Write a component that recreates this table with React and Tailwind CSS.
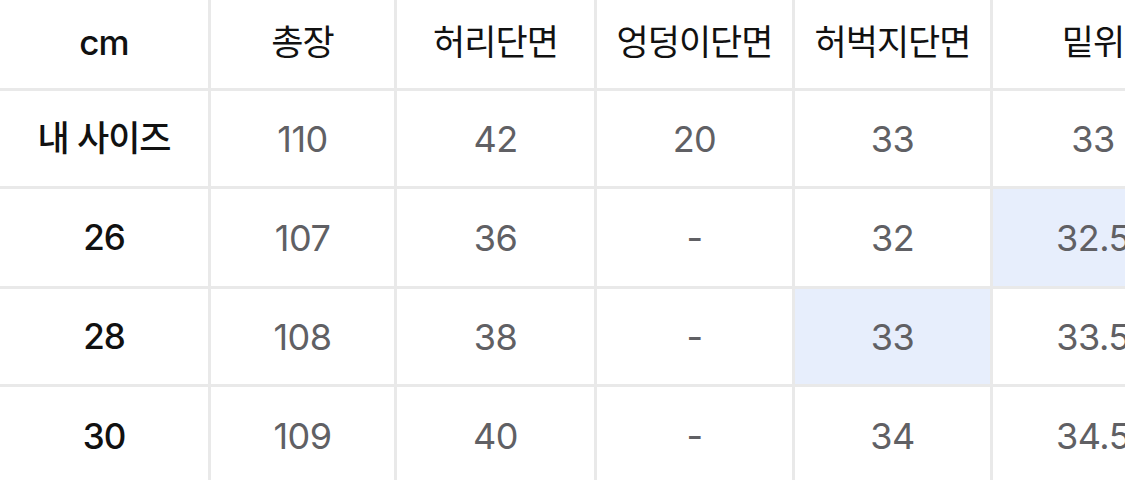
import React from 'react';

const columns = ['cm', '총장', '허리단면', '엉덩이단면', '허벅지단면', '밑위'];

const rows = [
  { label: '내 사이즈', values: ['110', '42', '20', '33', '33'] },
  { label: '26', values: ['107', '36', '-', '32', '32.5'], highlight: [4] },
  { label: '28', values: ['108', '38', '-', '33', '33.5'], highlight: [3] },
  { label: '30', values: ['109', '40', '-', '34', '34.5'] },
];

export default function App() {
  return (
    <div
      className="w-[1125px] h-[480px] overflow-hidden bg-white"
      style={{ fontFamily: '"Inter", "Noto Sans CJK KR", sans-serif' }}
    >
      <div className="grid grid-cols-[208px_183px_197px_195px_195px_200px] grid-rows-[88px_95px_97px_95px_98px] gap-[3px] bg-[#e9e9e9] w-max">
        {/* header */}
        {columns.map((col) => (
          <div
            key={col}
            className={`bg-white flex items-center justify-center pb-[3px] text-[35px] text-[#111] tracking-[-1px] ${
              col === 'cm' ? 'font-medium' : 'font-normal'
            }`}
          >
            {col}
          </div>
        ))}

        {rows.map((row) => (
          <React.Fragment key={row.label}>
            <div className="bg-white flex items-center justify-center text-[35px] font-medium text-[#111] tracking-[-1px]">
              {row.label}
            </div>
            {row.values.map((v, i) => (
              <div
                key={i}
                className={`flex items-center justify-center text-[36px] text-[#606064] tracking-[-0.5px] ${
                  row.highlight && row.highlight.includes(i) ? 'bg-[#e7eefc]' : 'bg-white'
                }`}
              >
                {v}
              </div>
            ))}
          </React.Fragment>
        ))}
      </div>
    </div>
  );
}
